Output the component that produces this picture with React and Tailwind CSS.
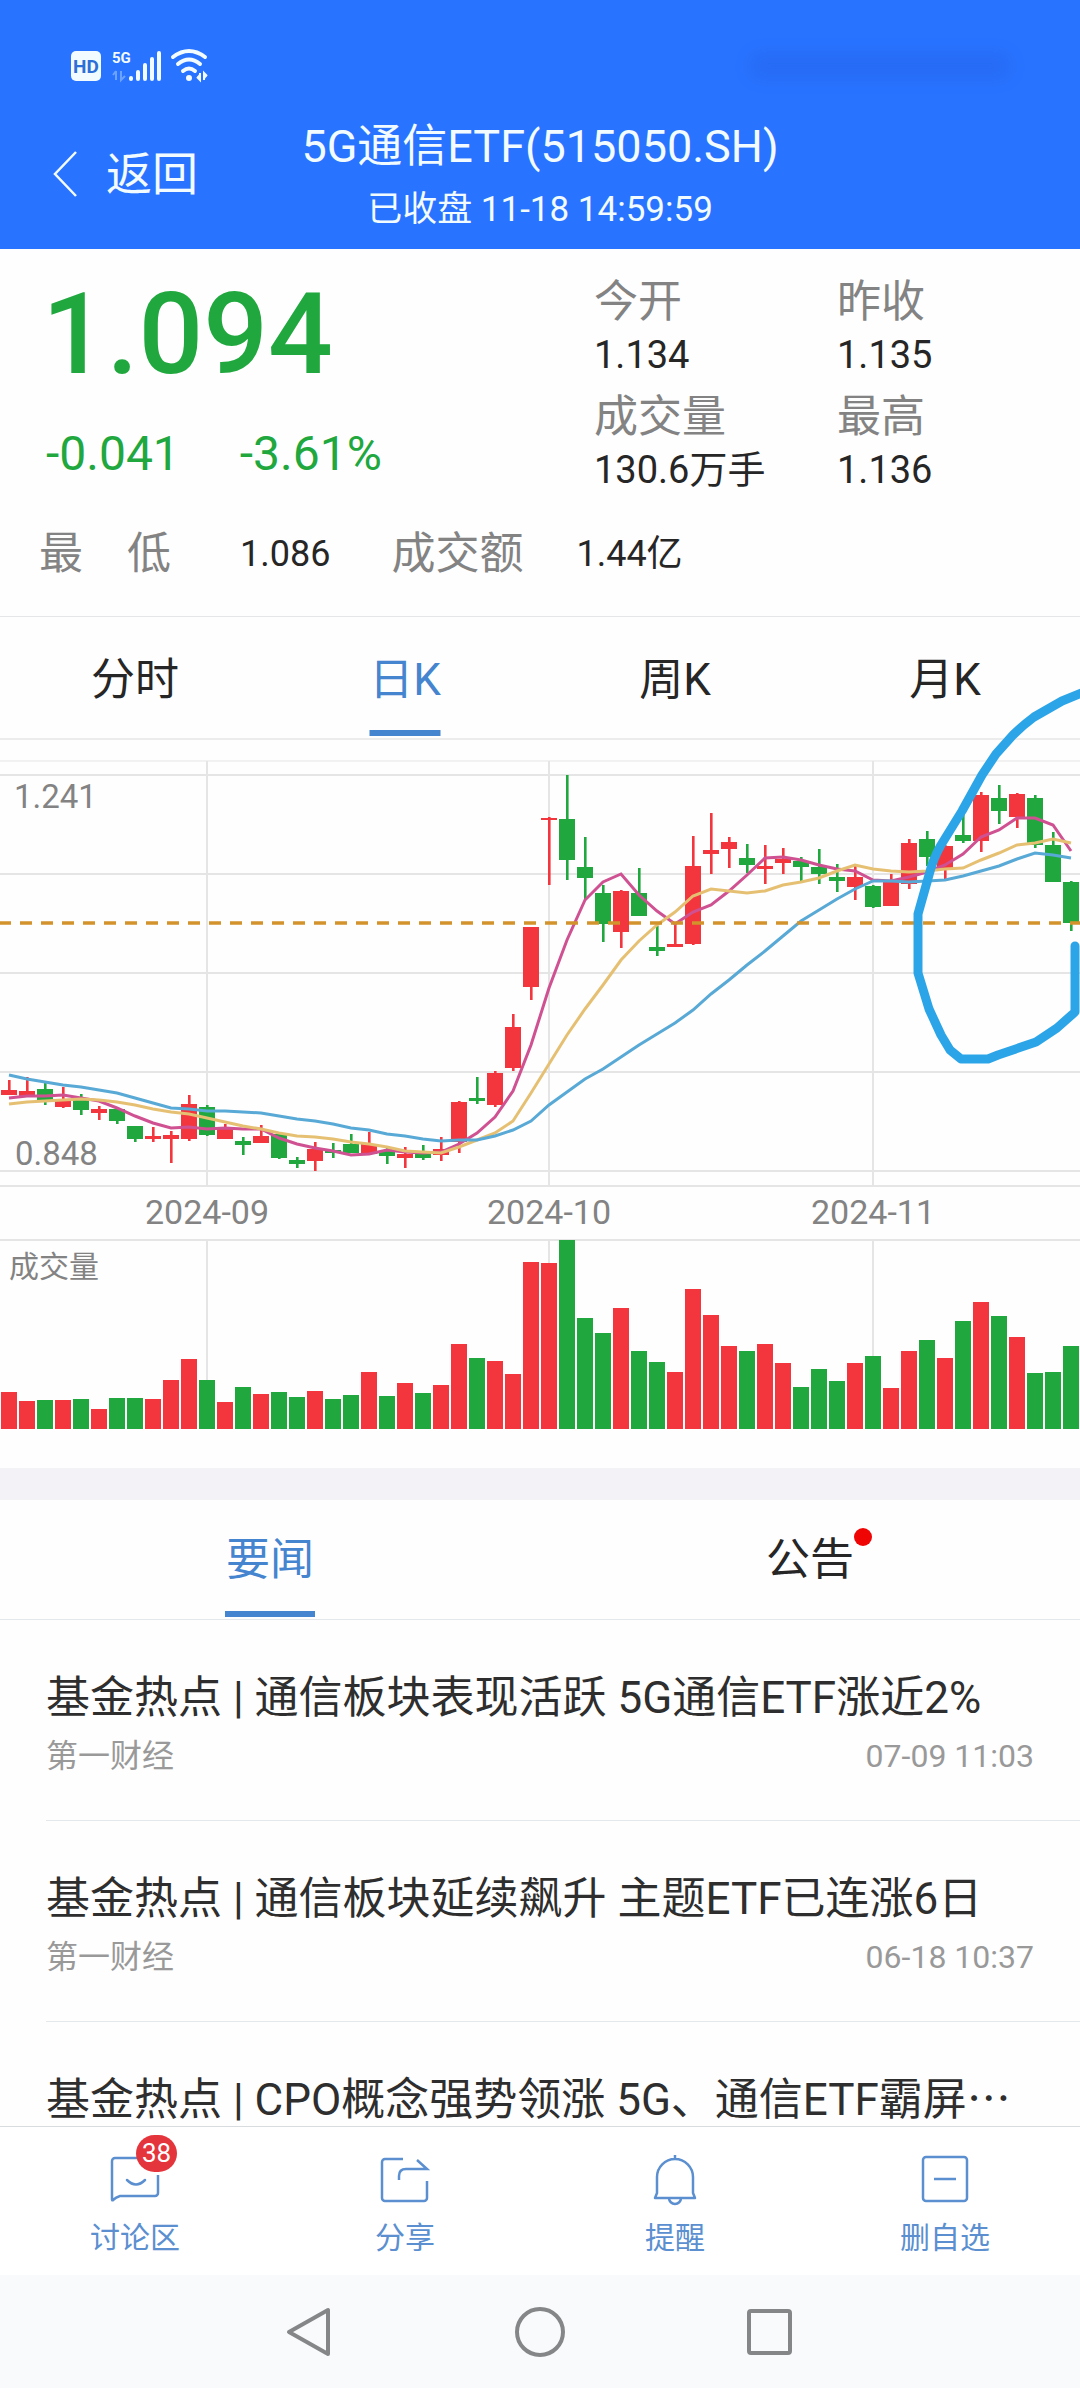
/**
 * Fund quote page: price header, daily K chart, volume and related news.
 */

const UP = '#f3353d';
const DOWN = '#20a83f';
const STEP = 18;

// [direction, high, body top, body bottom, low, volume]
const CANDLES = [
  ['u', 340, 350, 355, 355, 37],
  ['u', 337, 351, 356, 356, 28],
  ['d', 343, 349, 360, 365, 29],
  ['u', 347, 359, 367, 368, 29],
  ['d', 354, 360, 370, 375, 30],
  ['u', 366, 369, 373, 380, 20],
  ['d', 368, 369, 381, 384, 31],
  ['d', 386, 386, 399, 402, 31],
  ['u', 387, 396, 399, 402, 30],
  ['u', 391, 395, 399, 423, 49],
  ['u', 355, 364, 399, 401, 70],
  ['d', 365, 367, 395, 396, 49],
  ['u', 384, 387, 399, 399, 27],
  ['d', 397, 401, 405, 415, 42],
  ['u', 385, 396, 403, 403, 35],
  ['d', 393, 394, 418, 419, 37],
  ['d', 417, 420, 424, 428, 32],
  ['u', 402, 409, 421, 431, 38],
  ['d', 403, 410, 413, 418, 30],
  ['d', 394, 404, 413, 413, 34],
  ['u', 392, 404, 414, 415, 57],
  ['d', 406, 411, 416, 424, 33],
  ['u', 407, 414, 418, 428, 46],
  ['d', 405, 413, 418, 420, 36],
  ['u', 397, 409, 415, 421, 44],
  ['u', 361, 362, 402, 413, 85],
  ['d', 337, 358, 361, 364, 71],
  ['u', 331, 333, 365, 367, 68],
  ['u', 274, 287, 328, 331, 55],
  ['u', 187, 187, 247, 260, 167],
  ['u', 77, 78, 80, 145, 166],
  ['d', 35, 79, 120, 140, 189],
  ['d', 97, 127, 138, 160, 111],
  ['d', 145, 153, 184, 202, 96],
  ['u', 150, 151, 192, 208, 121],
  ['d', 128, 153, 176, 176, 78],
  ['d', 186, 207, 211, 216, 67],
  ['u', 183, 204, 207, 207, 57],
  ['u', 96, 126, 204, 205, 140],
  ['u', 73, 110, 114, 134, 114],
  ['u', 97, 102, 109, 128, 83],
  ['d', 104, 118, 125, 133, 78],
  ['u', 105, 126, 129, 144, 85],
  ['u', 108, 119, 123, 134, 66],
  ['d', 117, 121, 127, 141, 42],
  ['d', 109, 127, 134, 144, 60],
  ['d', 124, 137, 141, 152, 48],
  ['u', 126, 137, 147, 160, 66],
  ['d', 145, 146, 167, 168, 73],
  ['u', 134, 142, 166, 166, 41],
  ['u', 99, 103, 144, 149, 78],
  ['d', 91, 99, 117, 126, 89],
  ['u', 105, 106, 129, 140, 71],
  ['d', 74, 95, 101, 103, 108],
  ['u', 52, 55, 101, 112, 127],
  ['d', 45, 58, 71, 84, 113],
  ['u', 53, 54, 77, 88, 92],
  ['d', 55, 58, 105, 108, 56],
  ['d', 92, 105, 142, 142, 57],
  ['d', 141, 142, 183, 191, 83],
];

const AVERAGES = [
  {
    color: '#cf5192',
    values: [
      358, 356, 356, 355, 358, 361, 368, 376, 383, 388, 387, 389, 388, 389, 389, 398, 404, 408, 411, 415,
      414, 410, 412, 413, 412, 404, 393, 377, 351, 305, 248, 200, 160, 142, 134, 155, 171, 184, 172, 165,
      151, 135, 118, 117, 120, 125, 129, 131, 140, 141, 137, 132, 125, 114, 97, 90, 78, 78, 85, 111,
    ],
  },
  {
    color: '#e6c072',
    values: [
      364, 362, 361, 360, 359, 360, 362, 365, 369, 372, 374, 378, 382, 386, 389, 393, 396, 397, 399, 402,
      404, 407, 411, 412, 413, 407, 400, 393, 381, 353, 324, 295, 269, 245, 220, 201, 185, 172, 156, 149,
      151, 153, 151, 145, 142, 138, 131, 125, 129, 131, 132, 131, 129, 128, 120, 113, 105, 103, 99, 103,
    ],
  },
  {
    color: '#58a9d6',
    values: [
      335, 339, 342, 345, 347, 350, 353, 358, 363, 368, 369, 371, 371, 372, 373, 376, 379, 381, 384, 388,
      390, 394, 396, 399, 401, 400, 400, 396, 390, 381, 365, 352, 339, 329, 317, 305, 294, 283, 270, 254,
      240, 225, 211, 196, 181, 170, 159, 149, 141, 141, 142, 141, 140, 136, 131, 126, 119, 113, 115, 118,
    ],
  },
];

const MONTHS = [
  { x: 207, label: '2024-09' },
  { x: 549, label: '2024-10' },
  { x: 873, label: '2024-11' },
];

const NEWS = [
  { title: '基金热点 | 通信板块表现活跃 5G通信ETF涨近2%', source: '第一财经', time: '07-09 11:03' },
  { title: '基金热点 | 通信板块延续飙升 主题ETF已连涨6日', source: '第一财经', time: '06-18 10:37' },
  { title: '基金热点 | CPO概念强势领涨 5G、通信ETF霸屏⋯' },
];

const QUOTES = [
  { label: '今开', value: '1.134' },
  { label: '昨收', value: '1.135' },
  { label: '成交量', value: '130.6万手' },
  { label: '最高', value: '1.136' },
];

function StatusBar() {
  return (
    <div className="flex h-[30px] items-center justify-between">
      <svg viewBox="0 0 140 30" className="h-[30px] w-[140px] overflow-visible" fill="#f2fbff" aria-hidden="true">
        <rect x="0" y="0" width="30" height="30" rx="5" />
        <text x="15" y="22" textAnchor="middle" fontSize="19" fontWeight="700" fill="#2d6fd6">HD</text>
        <text x="41" y="12" fontSize="15" fontWeight="700">5G</text>
        <path d="M45 20v9M45 20l-3 4M50 20v9l4-4" stroke="#6ba3ff" strokeWidth="2" fill="none" />
        <path
          d="M60 27v1M67 21v7M74 14v14M81 8v20M88 2v26"
          stroke="#f2fbff"
          strokeWidth="4"
          strokeLinecap="round"
        />
        <g fill="none" stroke="#f2fbff" strokeWidth="4" strokeLinecap="round">
          <path d="M102 6q16-12 32 0" />
          <path d="M107 13q11-9 22 0" />
          <path d="M112 20q6-5 12 0" />
        </g>
        <circle cx="118" cy="27" r="3" />
        <path d="M129 22v7l-3-3M133 29v-7l3 3" stroke="#f2fbff" strokeWidth="2" />
      </svg>
      <div className="mr-[70px] h-6 w-[260px] rounded-full bg-blue-800/15 blur-sm" />
    </div>
  );
}

function Header() {
  return (
    <header className="shrink-0 bg-[#2873ff] pt-[51px] pb-[18px] text-[#f2fbff]">
      <div className="pl-[71px]">
        <StatusBar />
      </div>
      <div className="mt-[39px] grid grid-cols-[1fr_auto_1fr] items-center">
        <button type="button" className="flex items-center gap-7 pb-1 pl-[52px] text-[46px] leading-[54px]">
          <svg viewBox="0 0 26 48" className="h-12 w-[26px]" fill="none" stroke="currentColor" strokeWidth="2.5" aria-hidden="true">
            <path d="M24 2 3 24l21 22" />
          </svg>
          返回
        </button>
        <div className="flex flex-col items-center gap-[15px]">
          <h1 className="text-[45px] leading-[54px]">5G通信ETF(515050.SH)</h1>
          <p className="text-[35px] leading-[42px]">已收盘 11-18 14:59:59</p>
        </div>
      </div>
    </header>
  );
}

function Summary() {
  return (
    <section className="pt-[26px] pb-[35px]">
      <div className="flex">
        <div className="w-[55%] pl-[46px] text-[#20a83f]">
          <p className="-ml-1 text-[114px] leading-[118px] font-medium">1.094</p>
          <p className="mt-[34px] flex gap-[60px] text-[48px] leading-[54px]">
            <span>-0.041</span>
            <span>-3.61%</span>
          </p>
        </div>
        <dl className="grid flex-1 grid-cols-2 gap-y-[9px]">
          {QUOTES.map((q) => (
            <div key={q.label}>
              <dt className="text-[44px] leading-[54px] text-[#838383]">{q.label}</dt>
              <dd className="text-[38px] leading-[52px] whitespace-nowrap text-[#262626]">{q.value}</dd>
            </div>
          ))}
        </dl>
      </div>
      <dl className="mt-[31px] flex items-center pl-[39px] leading-[54px]">
        <dt className="text-[44px] text-[#838383]">最　低</dt>
        <dd className="pl-[69px] text-[36px] text-[#262626]">1.086</dd>
        <dt className="pl-[61px] text-[44px] text-[#838383]">成交额</dt>
        <dd className="pl-[53px] text-[36px] text-[#262626]">1.44亿</dd>
      </dl>
    </section>
  );
}

function PeriodTabs() {
  return (
    <nav className="grid grid-cols-4 border-t border-b-2 border-t-[#e4e6e8] border-b-[#ececec]">
      {['分时', '日K', '周K', '月K'].map((tab) => {
        const active = tab === '日K';
        return (
          <button
            key={tab}
            type="button"
            className={`relative h-[121px] pt-1 text-[44px] ${active ? 'text-[#4584cf]' : 'text-[#262626]'}`}
          >
            {tab}
            {active && <span className="absolute bottom-0.5 left-1/2 h-1.5 w-[71px] -translate-x-1/2 bg-[#4584cf]" />}
          </button>
        );
      })}
    </nav>
  );
}

function KChart() {
  return (
    <svg viewBox="0 0 1080 728" className="relative block h-auto w-full overflow-visible" role="img" aria-label="日K">
      {/* Grid */}
      <g stroke="#e5e5e5" strokeWidth="2">
        <path d="M0 21H1080" strokeWidth="1" />
        <path d="M0 35H1080M0 134H1080M0 233H1080M0 332H1080M0 431H1080M0 446H1080M0 500H1080" />
        {MONTHS.map((m) => (
          <path key={m.label} d={`M${m.x} 21V446M${m.x} 500V689`} />
        ))}
      </g>

      {/* Candles and volume */}
      {CANDLES.map(([dir, high, top, bottom, low, volume], i) => {
        const x = 9 + i * STEP;
        return (
          <g key={x} fill={dir === 'u' ? UP : DOWN}>
            <rect x={x - 1} y={high} width="2.6" height={low - high} />
            <rect x={x - 8} y={top} width="16" height={bottom - top} />
            <rect x={x - 8} y={689 - volume} width="16" height={volume} />
          </g>
        );
      })}

      {AVERAGES.map((line) => (
        <polyline
          key={line.color}
          points={line.values.map((y, i) => `${9 + i * STEP},${y}`).join(' ')}
          fill="none"
          stroke={line.color}
          strokeWidth="3"
        />
      ))}

      {/* Last price */}
      <path d="M-1 183H1080" stroke="#d3932c" strokeWidth="3.4" strokeDasharray="12 9" />

      <g fill="#838383" fontSize="33">
        <text x="14" y="68">1.241</text>
        <text x="15" y="425">0.848</text>
        <text x="9" y="537" fontSize="30">成交量</text>
        {MONTHS.map((m) => (
          <text key={m.label} x={m.x} y="484" fontSize="34" textAnchor="middle">{m.label}</text>
        ))}
      </g>

      {/* Hand drawn mark */}
      <path
        d="M1084-48 1062-39 1034-23Q1022-14 1013-5L996 14 982 35 962 71 941 105Q933 119 929 135L918 174V233L929 269 941 295 950 310 961 319H988L998 315 1036 302 1057 288 1075 272V206"
        fill="none"
        stroke="#2ca5e8"
        strokeWidth="9"
        strokeLinecap="round"
        strokeLinejoin="round"
      />
    </svg>
  );
}

function News() {
  return (
    <section className="border-t-[32px] border-[#f3f3f7]">
      <nav className="grid grid-cols-2 border-b border-[#e4e8ea] text-[44px]">
        <button type="button" className="relative h-[119px] text-[#4584cf]">
          要闻
          <span className="absolute bottom-0.5 left-1/2 h-1.5 w-[90px] -translate-x-1/2 bg-[#4584cf]" />
        </button>
        <button type="button" className="h-[119px] text-[#262626]">
          <span className="relative">
            公告
            <span className="absolute -top-1.5 left-full size-[18px] rounded-full bg-[#f00505]" />
          </span>
        </button>
      </nav>
      <ul className="pl-[46px]">
        {NEWS.map((item) => (
          <li key={item.title} className="border-b border-[#e4e8ea] pt-[46px] pr-[46px] pb-10">
            <a href="#news" className="block">
              <h2 className="text-[44px] leading-[64px] whitespace-nowrap text-[#2e2e2e]">{item.title}</h2>
              <p className="mt-0.5 flex justify-between text-[32px] leading-[48px] text-[#999]">
                <span>{item.source}</span>
                <span>{item.time}</span>
              </p>
            </a>
          </li>
        ))}
      </ul>
    </section>
  );
}

const ACTIONS = [
  {
    label: '讨论区',
    badge: '38',
    icon: (
      <>
        <path d="M47 20v18a3 3 0 0 1-3 3H9q-4 1-7 4-1 1-1-1V6a3 3 0 0 1 3-3h22" />
        <path d="M16 25q9 9 18 0" strokeLinecap="round" />
      </>
    ),
  },
  {
    label: '分享',
    icon: (
      <>
        <path d="M22 4H4a3 3 0 0 0-3 3v36a3 3 0 0 0 3 3h39a3 3 0 0 0 3-3V26" />
        <path d="M18 25v-4q0-7 7-7h21L36 5" />
      </>
    ),
  },
  {
    label: '提醒',
    icon: (
      <>
        <path d="M24 0v4M6 38V22a18 18 0 0 1 36 0v16l2 5H4z" strokeLinejoin="round" />
        <path d="M18 43a6 6 0 0 0 12 0" />
      </>
    ),
  },
  {
    label: '删自选',
    icon: (
      <>
        <rect x="2" y="2" width="44" height="44" rx="3" />
        <path d="M13 24h22" />
      </>
    ),
  },
];

function ActionBar() {
  return (
    <footer className="relative grid shrink-0 grid-cols-4 border-t border-[#d9dcde] bg-white">
      {ACTIONS.map((action) => (
        <button key={action.label} type="button" className="flex flex-col items-center pt-7 pb-[17px] text-[#5b8fd0]">
          <span className="relative">
            <svg viewBox="0 0 48 48" className="size-12 overflow-visible" fill="none" stroke="currentColor" strokeWidth="2.5" aria-hidden="true">
              {action.icon}
            </svg>
            {action.badge && (
              <span className="absolute -top-5 left-[25px] flex h-[37px] w-[41px] items-center justify-center rounded-full bg-[#e5353c] text-[26px] text-white">
                {action.badge}
              </span>
            )}
          </span>
          <span className="mt-[15px] text-[30px] leading-10">{action.label}</span>
        </button>
      ))}
    </footer>
  );
}

function SystemNav() {
  return (
    <div className="flex h-[113px] shrink-0 items-center justify-center gap-[180px] bg-[#f9fafc]">
      <button type="button" aria-label="返回">
        <svg viewBox="0 0 50 50" className="size-[50px]" fill="none" stroke="#848688" strokeWidth="4" strokeLinejoin="round">
          <path d="M43 3v44L4 25z" />
        </svg>
      </button>
      <button type="button" aria-label="主页">
        <svg viewBox="0 0 50 50" className="size-[50px]" fill="none" stroke="#848688" strokeWidth="4">
          <circle cx="25" cy="25" r="23" />
        </svg>
      </button>
      <button type="button" aria-label="最近任务">
        <svg viewBox="0 0 50 50" className="size-[50px]" fill="none" stroke="#848688" strokeWidth="4">
          <rect x="4" y="4" width="41" height="42" rx="2" />
        </svg>
      </button>
    </div>
  );
}

export default function App() {
  return (
    <div className="flex h-dvh flex-col bg-[#fefefe] font-[Roboto,'Noto_Sans_CJK_SC',sans-serif]">
      <Header />
      <main className="min-h-0 flex-1 overflow-x-hidden overflow-y-auto [scrollbar-width:none]">
        <Summary />
        <PeriodTabs />
        <KChart />
        <News />
      </main>
      <ActionBar />
      <SystemNav />
    </div>
  );
}
